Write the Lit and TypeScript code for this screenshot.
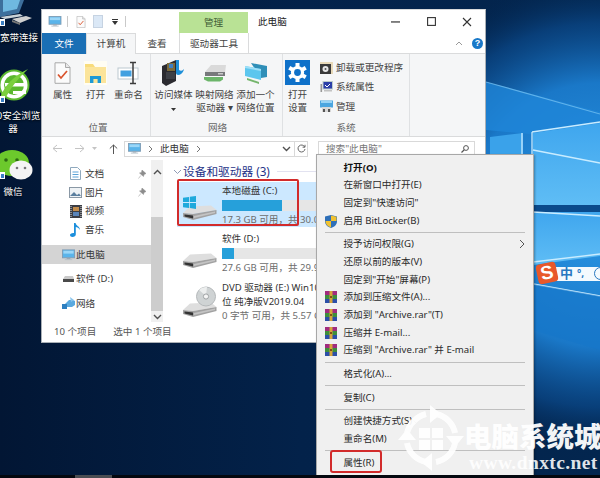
import { LitElement, html, css } from "lit";
import { customElement } from "lit/decorators.js";

const monitor = (w = 14, h = 12) => html`<svg width=${w} height=${h} viewBox="0 0 14 12"><rect x="0.5" y="0.5" width="13" height="8.5" fill="#5ab4ea" stroke="#7f9db5"/><rect x="1.5" y="1.5" width="11" height="3" fill="#9bd6f7"/><rect x="5" y="9" width="4" height="1.5" fill="#9aa9b5"/><rect x="3" y="10.5" width="8" height="1" fill="#b5c0c9"/></svg>`;
const noteIcon = (w: number, h: number) => html`<svg width=${w} height=${h} viewBox="0 0 17 22"><path d="M1 .8h10.5L16 5.3v16H1z" fill="#fbfbfb" stroke="#a9a9a9"/><path d="M11.5 1v4.5H16" fill="#e8e8e8" stroke="#a9a9a9"/><path d="M4 12.5l3 3.5 6-7" fill="none" stroke="#d9532c" stroke-width="1.7"/></svg>`;
const folderIcon = html`<svg width="23" height="24" viewBox="0 0 23 24"><rect width="23" height="24" fill="#fffdf3"/><path d="M1 3h8l2 3h11v16H1z" fill="#f8dc7c"/><rect x="1" y="6" width="21" height="16" fill="#fbe49a"/><path d="M6 22v-7h11v7h-3.4v-4h-4.2v4z" fill="#1d9ad6"/></svg>`;
const renameIcon = html`<svg width="24" height="24" viewBox="0 0 24 24"><rect x="1" y="7" width="20" height="11" fill="#fff" stroke="#bcc7cf"/><rect x="3.5" y="9.5" width="11" height="6" fill="#42a0e0"/><path d="M13 1.5h6M16 1.5v21M13 22.5h6" stroke="#3c3c3c" stroke-width="1.5" fill="none"/></svg>`;
const mediaIcon = html`<svg width="26" height="28" viewBox="0 0 26 28"><path d="M1 7l14-6v21l-10 5-4-3z" fill="#2b2b30"/><rect x="6" y="4" width="8" height="8" fill="#7a6a3c"/><rect x="8" y="5" width="4" height="4" fill="#3e7fc4"/><rect x="5" y="13" width="9" height="7" fill="#3d4046"/><path d="M15 1h3v10c3 2 5-1 5-1s-1 6-6 6c-1 0-2-1-2-2z" fill="#1d8fd8"/></svg>`;
const netDrive = html`<svg width="24" height="20" viewBox="0 0 24 20"><path d="M2 9L8 2h15l-1 8z" fill="#dadada"/><path d="M2 9h20v4H2z" fill="#77797b"/><rect x="15" y="10" width="5" height="1.5" fill="#c9c9c9"/><path d="M1 14h19v2.5l-3 2H5l-4-2z" fill="#6cb56a"/></svg>`;
const addNet = html`<svg width="24" height="24" viewBox="0 0 24 24"><path d="M7 2l16 3v11l-6 1z" fill="#2f8fb8"/><path d="M1 5l16 3v11L1 15z" fill="#5cc6ee"/><path d="M1 5l16 3v2L1 7z" fill="#9fe0f8"/><path d="M3 17l12 4v2L3 19z" fill="#75b56c"/></svg>`;
const settingsIcon = html`<svg width="25" height="25" viewBox="0 0 25 25"><rect width="25" height="25" fill="#0f71c9"/><g transform="translate(12.5 12.5)" fill="#fff"><circle r="6.6"/><g><rect x="-2" y="-9.5" width="4" height="19"/><rect x="-2" y="-9.5" width="4" height="19" transform="rotate(60)"/><rect x="-2" y="-9.5" width="4" height="19" transform="rotate(120)"/></g><circle r="3.4" fill="#0f71c9"/></g></svg>`;
const uninstallIcon = html`<svg width="13" height="12" viewBox="0 0 13 12"><rect width="13" height="12" fill="#e8d9b8"/><rect y="2" width="11" height="10" fill="#3a3a3a"/><circle cx="5.5" cy="7" r="3" fill="#e6e6e6"/><circle cx="5.5" cy="7" r="1" fill="#555"/></svg>`;
const sysIcon = html`<svg width="13" height="12" viewBox="0 0 13 12"><rect x="3" y="0.5" width="9.5" height="7.5" fill="#2b3fa8" stroke="#bcc"/><path d="M5 4l2 2 3-3" stroke="#fff" fill="none"/><rect x="0.5" y="3" width="1.6" height="8" fill="#999"/><rect x="4" y="9" width="8" height="1.5" fill="#c2c2c2"/></svg>`;
const manageIcon = html`<svg width="13" height="13" viewBox="0 0 13 13"><rect x="0" y="0.5" width="13" height="7" fill="#4ca6e0"/><rect x="1" y="1" width="11" height="2" fill="#9ad4f5"/><rect x="2" y="7" width="9" height="5" fill="#d8d8d8"/><rect x="3" y="9" width="2" height="3" fill="#555"/><rect x="8" y="9" width="2" height="3" fill="#555"/></svg>`;
const drive = html`<svg width="34" height="16" viewBox="0 0 34 16"><path d="M0 8L7 1.500 28 .5l5.500 4.500L10 9z" fill="#dedede"/><path d="M0 8l10 1 23.500-4v4L10 15 0 12z" fill="#a2a2a2"/><path d="M1.500 9.500L10 10.500v3l-8.500-2z" fill="#333"/><path d="M11 11l21-4.500v1.500L11 13z" fill="#c4c4c4"/></svg>`;
const winLogo = html`<svg width="13" height="13" viewBox="0 0 13 13" fill="#1fa9dc"><path d="M0 1.800L6 .9v5.200H0zM6.800.8L13 0v6.100H6.800zM0 6.900h6v5.200L0 11.200zM6.800 6.900H13V13l-6.200-.9z"/></svg>`;
const disc = html`<svg width="20" height="22" viewBox="0 0 20 22"><circle cx="10" cy="10.500" r="9.500" fill="#cfd3d4" stroke="#b4b8ba"/><path d="M10 10L3 4a9.500 9.500 0 0 1 8-3z" fill="#eceeee"/><circle cx="10" cy="10.500" r="2.600" fill="#f5f5f5" stroke="#9fa3a5"/></svg>`;
const docIcon = html`<svg width="11" height="13" viewBox="0 0 11 13"><path d="M.5.5h7l3 3v9H.5z" fill="#fff" stroke="#8fa9be"/><path d="M2.500 5h6M2.500 7.500h6M2.500 10h6" stroke="#5aa3d8"/></svg>`;
const picIcon = html`<svg width="13" height="11" viewBox="0 0 13 11"><rect x=".5" y=".5" width="12" height="10" fill="#eef2f5" stroke="#8a98a5"/><path d="M1 9l4-4 3 3 2-1.500 2 2.500z" fill="#5b7f9f"/></svg>`;
const vidIcon = html`<svg width="12" height="13" viewBox="0 0 12 13"><rect width="12" height="13" fill="#3b3d44"/><rect x="3" y="2" width="6" height="4" fill="#c28c4c"/><rect x="3" y="7" width="6" height="4" fill="#5a84b8"/><path d="M1 1v11M11 1v11" stroke="#ddd" stroke-dasharray="1 1"/></svg>`;
const musicIcon = html`<svg width="11" height="15" viewBox="0 0 11 15"><path d="M4 1h1.600c.3 3 4.400 3 4.400 7-1-2-3-3-4.200-3v7.500C5.800 14 4.300 15 2.500 15 1 15 0 14 0 13s1.500-2.300 4-2z" fill="#1c8fdc"/></svg>`;
const hddSmall = html`<svg width="11" height="6" viewBox="0 0 11 6"><path d="M0 3l2-3h8l1 3z" fill="#c9c9c9"/><rect y="3" width="11" height="3" fill="#4a4a4a"/></svg>`;
const netIcon = html`<svg width="13" height="13" viewBox="0 0 13 13"><path d="M3 7l4-4h4l2 1v4l-3 2H5z" fill="#59a9df"/><path d="M8 0l4 3-3 2z" fill="#89c4ec"/><rect y="7" width="5" height="5" fill="#2d7fc0"/></svg>`;
const pin = html`<svg width="8" height="9" viewBox="0 0 8 9"><path d="M4 0l4 3.500-2 1-.5 2L1.500 3 3.500 2.500zM2.800 5.500L.5 8.500" fill="#8c8c8c" stroke="#8c8c8c" stroke-width=".5"/></svg>`;
const chevUp = html`<svg width="9" height="6" viewBox="0 0 9 6"><path d="M1 5l3.500-3.500L8 5" fill="none" stroke="#505050" stroke-width="1.400"/></svg>`;
const chevDown = html`<svg width="9" height="6" viewBox="0 0 9 6"><path d="M1 1l3.500 3.500L8 1" fill="none" stroke="#505050" stroke-width="1.400"/></svg>`;
const chevR = html`<svg width="5" height="8" viewBox="0 0 5 8"><path d="M1 1l3 3-3 3" fill="none" stroke="#777" stroke-width="1"/></svg>`;
const shield = html`<svg width="12" height="13" viewBox="0 0 12 13"><path d="M6 0l6 1.500V6c0 4-3 6-6 7-3-1-6-3-6-7V1.500z" fill="#2f6fb8"/><path d="M6 .5l5.500 1.300V6H6z" fill="#f2c230"/><path d="M6 6H.5c0 3.500 2.500 5.500 5.500 6.500z" fill="#f2c230"/></svg>`;
const rar = html`<svg width="12" height="12" viewBox="0 0 12 12"><rect width="12" height="4" fill="#a12b7e"/><rect y="4" width="12" height="4" fill="#3f8e3c"/><rect y="8" width="12" height="4" fill="#2b4fa8"/><rect x="4.500" width="3" height="12" fill="#d8a53a"/><rect x="5.200" y="5" width="1.600" height="2" fill="#6b3a12"/></svg>`;
const caret = html`<svg width="5" height="3" viewBox="0 0 5 3"><path d="M0 0h5L2.500 3z" fill="#333"/></svg>`;

type Btn = { icon: unknown; lines: string[]; caret?: number };
const group1: Btn[] = [
  { icon: noteIcon(17, 22), lines: ["属性"] },
  { icon: folderIcon, lines: ["打开"] },
  { icon: renameIcon, lines: ["重命名"] },
];
const group2: Btn[] = [
  { icon: mediaIcon, lines: ["访问媒体"], caret: 1 },
  { icon: netDrive, lines: ["映射网络", "驱动器 ▾"] },
  { icon: addNet, lines: ["添加一个", "网络位置"] },
];
const sysItems = [
  { icon: uninstallIcon, label: "卸载或更改程序" },
  { icon: sysIcon, label: "系统属性" },
  { icon: manageIcon, label: "管理" },
];
const navItems = [
  { icon: docIcon, label: "文档", pin: true, cls: "sub" },
  { icon: picIcon, label: "图片", pin: true, cls: "sub" },
  { icon: vidIcon, label: "视频", cls: "sub" },
  { icon: musicIcon, label: "音乐", cls: "sub" },
  { icon: monitor(13, 12), label: "此电脑", cls: "top active" },
  { icon: hddSmall, label: "软件 (D:)", cls: "top" },
  { icon: netIcon, label: "网络", cls: "top" },
];
const drives = [
  { name: "本地磁盘 (C:)", used: 60, cap: "17.3 GB 可用，共 30.0 GB", sel: true, logo: true },
  { name: "软件 (D:)", used: 12, cap: "27.6 GB 可用，共 29.9 GB" },
];
type Mi = { t?: string; bold?: boolean; icon?: unknown; sub?: boolean; sep?: boolean };
const menu: Mi[] = [
  { t: "打开(O)", bold: true },
  { t: "在新窗口中打开(E)" },
  { t: "固定到\"快速访问\"" },
  { t: "启用 BitLocker(B)", icon: shield },
  { sep: true },
  { t: "授予访问权限(G)", sub: true },
  { t: "还原以前的版本(V)" },
  { t: "固定到\"开始\"屏幕(P)" },
  { t: "添加到压缩文件(A)...", icon: rar },
  { t: "添加到 \"Archive.rar\"(T)", icon: rar },
  { t: "压缩并 E-mail...", icon: rar },
  { t: "压缩到 \"Archive.rar\" 并 E-mail", icon: rar },
  { sep: true },
  { t: "格式化(A)..." },
  { sep: true },
  { t: "复制(C)" },
  { sep: true },
  { t: "创建快捷方式(S)" },
  { t: "重命名(M)" },
  { sep: true },
  { t: "属性(R)" },
];

@customElement("app-root")
export class AppRoot extends LitElement {
  static styles = css`
    :host { display: block; width: 600px; height: 478px; position: relative; overflow: hidden; background: #03193a;
      font-family: "Noto Sans", "Noto Sans CJK SC", sans-serif; font-size: 9.6px; color: #333; line-height: 1; }
    .wall, .mark { position: absolute; left: 0; top: 0; }
    .taskbar { position: absolute; left: 0; right: 0; bottom: 0; height: 3px; background: #04080f; }
    .taskbar i { display: block; margin-left: 75px; width: 37px; height: 3px; background: #4a4d52; }
    .dicon { position: absolute; color: #fff; text-shadow: 0 1px 2px #000; text-align: center; font-size: 9.5px; line-height: 13px; }
    .d1 { left: -9px; top: 31px; width: 56px; }
    .d2 { left: -17px; top: 109px; width: 60px; }
    .d3 { left: -2px; top: 185px; width: 30px; }
    .win { position: absolute; left: 41px; top: 9px; width: 445px; height: 334px; box-sizing: border-box; background: #fff;
      border: 1px solid #aab0b6; border-top-color: #d8dadc; display: flex; flex-direction: column; overflow: hidden; }
    .title { height: 23px; display: flex; flex: none; }
    .qat { width: 137px; display: flex; align-items: center; padding-left: 6px; box-sizing: border-box; gap: 5px; }
    .qat .vs { width: 1px; height: 11px; background: #c9c9c9; }
    .qn { margin-left: 3px; display: flex; }
    .qb { margin-left: 2px; }
    .qd { margin-left: 4px; }
    .qat .vs.l { margin-left: 2px; }
    .ctx { width: 69px; margin-top: 2px; background: #b9e295; display: flex; align-items: center; justify-content: center; color: #3f5d35; }
    .cap { margin-left: 10px; align-self: center; color: #222; }
    .ctl { margin-left: auto; display: flex; align-items: center; }
    .ctl span { width: 36px; display: flex; justify-content: center; }
    .tabs { height: 21px; flex: none; display: flex; align-items: stretch; position: relative; box-shadow: inset 0 -1px 0 #dadbdc; }
    .tab { display: flex; align-items: center; justify-content: center; color: #444; }
    .tab.file { width: 44px; background: #1a6fb5; color: #fff; }
    .tab.act { width: 50px; background: #f5f6f7; border: 1px solid #dadbdc; border-bottom: none; box-sizing: border-box; }
    .tab.view { width: 42px; }
    .tab.tool { width: 70px; margin-left: 1px; border-left: 1px solid #dadbdc; border-right: 1px solid #dadbdc; box-sizing: border-box; }
    .tabend { margin-left: auto; display: flex; align-items: center; gap: 9px; padding-right: 2px; }
    .help { width: 11px; height: 11px; border-radius: 50%; background: #1878c8; color: #fff; font: bold 9px/11px "Liberation Sans", sans-serif; text-align: center; }
    .ribbon { height: 83px; flex: none; display: flex; background: #f5f6f7; border-bottom: 1px solid #dadbdc; box-sizing: border-box; }
    .grp { display: flex; flex-direction: column; border-right: 1px solid #dfe1e3; box-sizing: border-box; }
    .g1 { width: 109px; padding-left: 4px; }
    .g2 { width: 132px; padding-left: 2px; }
    .g3 { width: 127px; }
    .gb { flex: 1; display: flex; }
    .gl { height: 17px; display: flex; align-items: center; justify-content: center; color: #666; flex: none; }
    .rbtn { display: flex; flex-direction: column; align-items: center; padding-top: 5px; color: #444; }
    .g1 .rbtn { width: 33px; }
    .g2 .rbtn { width: 41px; }
    .g3 .rbtn { width: 29px; }
    .ri { height: 27px; display: flex; align-items: center; justify-content: center; margin-bottom: 2px; }
    .rl { line-height: 13px; white-space: nowrap; }
    .crt { display: block; margin-top: 2px; }
    .sys { margin-left: 8px; padding-top: 7px; display: flex; flex-direction: column; gap: 6.500px; }
    .sys div { display: flex; align-items: center; gap: 3px; height: 13px; color: #444; white-space: nowrap; }
    .addr { height: 23px; flex: none; display: flex; align-items: center; padding-left: 10px; box-sizing: border-box; }
    .nav-a { width: 72px; display: flex; align-items: center; gap: 13px; }
    .nav-a .n1 { margin-left: -6px; }
    .nav-a .n2 { margin-left: -1px; }
    .abox { width: 184px; height: 16px; box-sizing: border-box; border: 1px solid #d9d9d9; display: flex; align-items: center; padding-left: 3px; }
    .abox .pth { margin: 0 7px; display: flex; }
    .abox .end { margin-left: auto; display: flex; align-items: center; height: 100%; }
    .abox .dd { padding: 0 3px; border-right: 1px solid #d9d9d9; height: 100%; display: flex; align-items: center; }
    .abox .rf { width: 12px; display: flex; justify-content: center; }
    .sbox { width: 157px; height: 16px; margin-left: 10px; box-sizing: border-box; border: 1px solid #d9d9d9; display: flex; align-items: center; padding: 0 5px 0 7px; color: #777; justify-content: space-between; }
    .body { flex: 1; display: flex; min-height: 0; }
    .nav { width: 109px; flex: none; padding-top: 4.500px; box-sizing: border-box; }
    .ni { height: 18.700px; display: flex; align-items: center; color: #3a3a3a; position: relative; }
    .ni.sub { padding-left: 26px; }
    .ni.sub .nic { width: 15px; }
    .ni.sub .nl { margin-left: 2px; }
    .ni.top { padding-left: 19px; margin-top: 6px; }
    .ni.top .nic { width: 15px; }
    .ni.active { background: #d4d4d4; }
    .nic { display: flex; align-items: center; justify-content: center; flex: none; }
    .pin { position: absolute; left: 96px; top: 5px; display: flex; }
    .sb { width: 12px; flex: none; background: #f0f0f0; display: flex; flex-direction: column; align-items: center; }
    .sb .au { margin-top: 9px; height: 6px; display: flex; }
    .sb .thumb { margin-top: 42px; width: 100%; height: 94px; background: #cdcdcd; }
    .sb .ad { margin-top: 3px; height: 6px; display: flex; }
    .main { flex: 1; padding: 5px 0 0 14px; min-width: 0; overflow: hidden; }
    .hd { display: flex; align-items: center; height: 13px; margin-left: -4px; color: #1e3287; font-size: 11.700px; white-space: nowrap; }
    .hd svg { margin-right: 1px; }
    .hd .ln { flex: 1; height: 1px; background: #e2e2f0; margin-left: 7px; }
    .tile { width: 240px; display: flex; padding: 2px 0 0 6px; height: 43px; box-sizing: content-box; margin-bottom: 3px; }
    .tile.s { background: #cce8ff; margin-top: 4px; }
    .tile.e { margin-top: 4px; }
    .dic { width: 39px; flex: none; display: flex; flex-direction: column; justify-content: flex-end; align-items: flex-start; padding-bottom: 6px; box-sizing: border-box; position: relative; }
    .dlogo { position: absolute; left: 0; top: 12px; }
    .ddisc { position: absolute; left: 13px; top: 5px; }
    .dt { flex: 1; min-width: 0; color: #333; white-space: nowrap; }
    .dn { line-height: 13px; }
    .dn2 { line-height: 14px; }
    .bar { width: 142px; height: 10.500px; margin: 3px 0 2px; background: #e6e6e6; display: flex; }
    .bar i { display: block; background: #26a0da; height: 100%; }
    .dc { color: #6d6d6d; line-height: 13px; }
    .dc2 { line-height: 14px; }
    .stat { height: 20px; flex: none; display: flex; align-items: center; padding-left: 12px; gap: 17px; color: #555; }
    .redc { position: absolute; left: 177px; top: 179px; width: 122px; height: 47px; box-sizing: border-box; border: 2px solid #d22b2b; border-radius: 2px; }
    .menu { position: absolute; left: 316px; top: 154px; width: 218px; height: 322px; box-sizing: border-box; background: #f0f0f0; border: 1px solid #a8a8a8; padding: 3.500px 1px 0; box-shadow: 1px 1px 2px rgba(0,0,0,.3); }
    .mi { height: 17.700px; display: flex; align-items: center; position: relative; color: #2a2a2a; white-space: nowrap; padding-left: 25.500px; }
    .mi.b { font-weight: 700; color: #111; }
    .mi .mic { position: absolute; left: 6.500px; top: 3px; display: flex; }
    .mi .arr { position: absolute; right: 7px; top: 4px; display: flex; }
    .sep { height: 6px; display: flex; align-items: center; padding: 0 7px; }
    .sep i { display: block; width: 100%; height: 1px; background: #bfbfbf; }
    .redm { position: absolute; left: 13px; top: 295px; width: 52px; height: 23px; box-sizing: border-box; border: 2px solid #d22b2b; border-radius: 3px; }
    .ime { position: absolute; left: 535px; top: 262px; width: 65px; height: 22px; display: flex; align-items: center; }
    .ime .bg { position: absolute; left: 4px; right: 0; top: 5px; height: 14px; background: #f4fafe; }
    .ime .s { position: relative; width: 20px; height: 20px; background: #e8582a; border-radius: 4px; transform: rotate(-12deg); color: #fff; font: bold 19px/20px "Liberation Sans", sans-serif; text-align: center; margin-left: 2px; flex: none; }
    .ime .z { position: relative; margin-left: 3px; color: #2878c0; font-size: 13px; font-weight: 700; }
    .ime .d { position: relative; margin-left: 4px; color: #2878c0; font-size: 10px; font-weight: 700; }
    .ime .o { position: relative; margin-left: 10px; width: 11px; height: 11px; border-radius: 50%; border: 1.500px solid #2878c0; flex: none; }
    .wmt { position: absolute; left: 464px; top: 421px; font-size: 27.500px; font-weight: 900; color: #fff; white-space: nowrap; line-height: 32px; opacity: .95; }
    .wmu { position: absolute; left: 469px; top: 453px; font: bold 19.500px/20px "Liberation Serif", serif; color: rgba(255,255,255,.88); white-space: nowrap; letter-spacing: .4px; }
  `;

  private rbtn(b: Btn) {
    return html`<div class="rbtn"><div class="ri">${b.icon}</div>
      ${b.lines.map((l) => html`<div class="rl">${l}</div>`)}
      ${b.caret ? html`<span class="crt">${caret}</span>` : ""}</div>`;
  }

  private wall() {
    return html`<svg class="wall" width="600" height="478" viewBox="0 0 600 478">
      <defs>
        <linearGradient id="base" x1="0" x2="1" y1="0" y2="0"><stop offset="0" stop-color="#021634"/><stop offset=".5" stop-color="#03224a"/><stop offset="1" stop-color="#03264f"/></linearGradient>
        <radialGradient id="glow" gradientUnits="userSpaceOnUse" cx="600" cy="215" r="240"><stop offset="0" stop-color="#2b98e6"/><stop offset=".55" stop-color="#1a78c8"/><stop offset=".8" stop-color="#0b4a8c" stop-opacity=".7"/><stop offset="1" stop-color="#03264f" stop-opacity="0"/></radialGradient>
        <linearGradient id="pan" x1="0" x2="0" y1="0" y2="1"><stop offset="0" stop-color="#3fa6ee"/><stop offset="1" stop-color="#5fbdf5"/></linearGradient>
      </defs>
      <rect width="600" height="478" fill="url(#base)"/>
      <rect width="600" height="478" fill="url(#glow)"/>
      <path d="M486 82L600 112V128L530 134L486 130z" fill="#1f86d8" opacity=".8"/>
      <path d="M486 82L600 114" stroke="#7cc7f5" stroke-width="1.200" opacity=".7"/>
      <path d="M533 133L600 123V205H533z" fill="url(#pan)"/>
      <path d="M533 212H600V256L533 265z" fill="url(#pan)"/>
      <rect x="533" y="205" width="67" height="7" fill="#0a4a8c"/>
      <path d="M490 137L523 133V154H490z" fill="#3aa2ea"/>
      <path d="M532 132L600 122M532 132V154M522 133V154M533 150L600 163M533 212L600 216M533 262L600 254M533 284L600 296" stroke="#c9ecff" stroke-width="1.300" fill="none"/>
      <path d="M533 284L600 296V350L533 330z" fill="#1576c9" opacity=".6"/>
    </svg>`;
  }

  private desk() {
    return html`
      <svg class="wall" width="42" height="190" viewBox="0 0 42 190">
        <path d="M0 0h24L19 13 0 17z" fill="#3d6f9c"/><path d="M3 0h17l-3 9-14 3z" fill="#6fb8e0"/>
        <path d="M0 17l20-3 3 2-18 3z" fill="#c9d2d8"/>
        <path d="M12 19l14-3 6 2-12 5z" fill="#cfcfcf"/><path d="M12 20l8 3v2l-8-3z" fill="#777"/>
        <rect x="0" y="19" width="5" height="7" fill="#fff"/><rect x="1" y="21" width="3" height="4" fill="#3b7fc4"/>
        <circle cx="14" cy="85" r="15.500" fill="#5bb82f"/>
        <circle cx="14" cy="85" r="13.500" fill="#fff"/>
        <circle cx="14" cy="85" r="10" fill="#5bb82f"/>
        <path d="M5 83h19v3.500H5z" fill="#fff"/>
        <path d="M13 91h13v3H13z" fill="#fff"/>
        <path d="M0 98Q6 80 28 69Q14 82 6 97z" fill="#7bcf3e"/>
        <rect x="0" y="96" width="5" height="7" fill="#fff"/><rect x="1" y="98" width="3" height="4" fill="#3b7fc4"/>
        <ellipse cx="12" cy="163" rx="17" ry="13" fill="#6cc92c"/>
        <circle cx="6" cy="160" r="1.800" fill="#2c6a12"/><circle cx="17" cy="160" r="1.800" fill="#2c6a12"/>
        <ellipse cx="21" cy="170" rx="11.500" ry="9.500" fill="#f4f4f4"/>
        <circle cx="17" cy="168" r="1.300" fill="#777"/><circle cx="25" cy="168" r="1.300" fill="#777"/>
        <rect x="0" y="172" width="5" height="7" fill="#fff"/><rect x="1" y="174" width="3" height="4" fill="#3b7fc4"/>
      </svg>
      <div class="dicon d1">宽带连接</div>
      <div class="dicon d2">360安全浏览器</div>
      <div class="dicon d3">微信</div>`;
  }

  private window() {
    return html`<div class="win">
      <div class="title">
        <div class="qat">${monitor(14, 11)}<span class="vs"></span><span class="qn">${noteIcon(10, 12)}</span>
          <svg class="qb" width="10" height="13" viewBox="0 0 10 13"><rect x=".5" y=".5" width="9" height="12" fill="#dbe8f6" stroke="#c6d3e2"/></svg>
          <svg class="qd" width="6" height="6" viewBox="0 0 6 6"><path d="M0 0h6v1H0zM0 2h6L3 6z" fill="#333"/></svg>
          <span class="vs l"></span></div>
        <div class="ctx">管理</div>
        <div class="cap">此电脑</div>
        <div class="ctl">
          <span><svg width="9" height="2"><rect width="9" height="1.300" y=".3" fill="#444"/></svg></span>
          <span><svg width="9" height="9"><rect x=".6" y=".6" width="7.800" height="7.800" fill="none" stroke="#333" stroke-width="1.100"/></svg></span>
          <span><svg width="10" height="10"><path d="M1 1l8 8M9 1L1 9" stroke="#333" stroke-width="1.100"/></svg></span>
        </div>
      </div>
      <div class="tabs">
        <div class="tab file">文件</div><div class="tab act">计算机</div><div class="tab view">查看</div><div class="tab tool">驱动器工具</div>
        <div class="tabend"><svg width="8" height="5" viewBox="0 0 8 5"><path d="M1 4l3-3 3 3" fill="none" stroke="#999"/></svg><span class="help">?</span></div>
      </div>
      <div class="ribbon">
        <div class="grp g1"><div class="gb">${group1.map((b) => this.rbtn(b))}</div><div class="gl">位置</div></div>
        <div class="grp g2"><div class="gb">${group2.map((b) => this.rbtn(b))}</div><div class="gl">网络</div></div>
        <div class="grp g3"><div class="gb">${this.rbtn({ icon: settingsIcon, lines: ["打开", "设置"] })}
          <div class="sys">${sysItems.map((s) => html`<div>${s.icon}<span>${s.label}</span></div>`)}</div></div><div class="gl">系统</div></div>
      </div>
      <div class="addr">
        <div class="nav-a">
          <svg width="10" height="9" viewBox="0 0 10 9"><path d="M5 1L1 4.500 5 8M1 4.500h9" fill="none" stroke="#c4c4c4"/></svg>
          <svg width="10" height="9" viewBox="0 0 10 9"><path d="M5 1l4 3.500L5 8M9 4.500H0" fill="none" stroke="#c4c4c4"/></svg>
          <svg class="n1" width="5" height="3" viewBox="0 0 5 3"><path d="M0 0h5L2.500 3z" fill="#c4c4c4"/></svg>
          <svg class="n2" width="9" height="10" viewBox="0 0 9 10"><path d="M.8 4.500L4.500 1l3.700 3.500M4.500 1v9" fill="none" stroke="#555"/></svg>
        </div>
        <div class="abox">${monitor(13, 11)}<span class="pth">${chevR}</span><span>此电脑</span><span class="pth">${chevR}</span>
          <span class="end"><span class="dd">${chevDown}</span><span class="rf"><svg width="9" height="9" viewBox="0 0 9 9"><path d="M7.700 3A3.500 3.500 0 1 0 8 5M8 .8V3.200H5.600" fill="none" stroke="#666"/></svg></span></span></div>
        <div class="sbox"><span>搜索"此电脑"</span><svg width="8" height="8" viewBox="0 0 8 8"><circle cx="5" cy="3" r="2.400" fill="none" stroke="#555"/><path d="M3.300 4.800L.5 7.500" stroke="#555" stroke-width="1.200"/></svg></div>
      </div>
      <div class="body">
        <div class="nav">${navItems.map((n) => html`<div class="ni ${n.cls}"><span class="nic">${n.icon}</span><span class="nl">${n.label}</span>${n.pin ? html`<span class="pin">${pin}</span>` : ""}</div>`)}</div>
        <div class="sb"><span class="au">${chevUp}</span><div class="thumb"></div><span class="ad">${chevDown}</span></div>
        <div class="main">
          <div class="hd"><svg width="9" height="6" viewBox="0 0 9 6"><path d="M1 1l3.500 3.500L8 1" fill="none" stroke="#8f9bb5"/></svg><span>设备和驱动器 (3)</span><span class="ln"></span></div>
          ${drives.map((d) => html`<div class="tile ${d.sel ? "s" : ""}">
            <div class="dic">${d.logo ? html`<span class="dlogo">${winLogo}</span>` : ""}${drive}</div>
            <div class="dt"><div class="dn">${d.name}</div><div class="bar"><i style="width:${d.used}px"></i></div><div class="dc">${d.cap}</div></div></div>`)}
          <div class="tile e"><div class="dic"><span class="ddisc">${disc}</span>${drive}</div>
            <div class="dt"><div class="dn2">DVD 驱动器 (E:) Win10 64</div><div class="dn2">位 纯净版V2019.04</div><div class="dc dc2">0 字节 可用，共 5.57 GB</div></div></div>
        </div>
      </div>
      <div class="stat"><span>10 个项目</span><span>选中 1 个项目</span></div>
    </div>`;
  }

  private menuEl() {
    return html`<div class="menu">
      ${menu.map((m) => m.sep
        ? html`<div class="sep"><i></i></div>`
        : html`<div class="mi ${m.bold ? "b" : ""}">${m.icon ? html`<span class="mic">${m.icon}</span>` : ""}<span>${m.t}</span>${m.sub ? html`<span class="arr"><svg width="6" height="10" viewBox="0 0 6 10"><path d="M1 1l4 4-4 4" fill="none" stroke="#555"/></svg></span>` : ""}</div>`)}
      <div class="redm"></div>
    </div>`;
  }

  render() {
    return html`
      ${this.wall()}
      ${this.desk()}
      ${this.window()}
      <div class="redc"></div>
      ${this.menuEl()}
      <div class="ime"><span class="bg"></span><span class="s">S</span><span class="z">中</span><span class="d">°,</span><span class="o"></span></div>
      <svg class="mark" width="600" height="478" viewBox="0 0 600 478">
        <g fill="none" stroke="#fff" stroke-width="6" opacity=".92">
          <path d="M414 421A24 24 0 0 1 426 414"/><path d="M436 414A24 24 0 0 1 455 433"/><path d="M455 443A24 24 0 0 1 436 462"/><path d="M426 462A24 24 0 0 1 407 443"/><path d="M407 433A24 24 0 0 1 414 421"/>
        </g>
        <g fill="#fff" opacity=".95">
          <path d="M430 405l11 9-11 9zM464 436l-9 11-9-11zM432 471l-11-9 11-9zM398 440l9-11 9 11z"/>
          <rect x="419" y="428" width="11" height="10"/><rect x="432" y="428" width="11" height="10"/><rect x="419" y="440" width="11" height="10"/><rect x="432" y="440" width="11" height="10"/>
        </g>
      </svg>
      <div class="wmt">电脑系统城</div>
      <div class="wmu">www.dnxtc.net</div>
      <div class="taskbar"><i></i></div>
    `;
  }
}
